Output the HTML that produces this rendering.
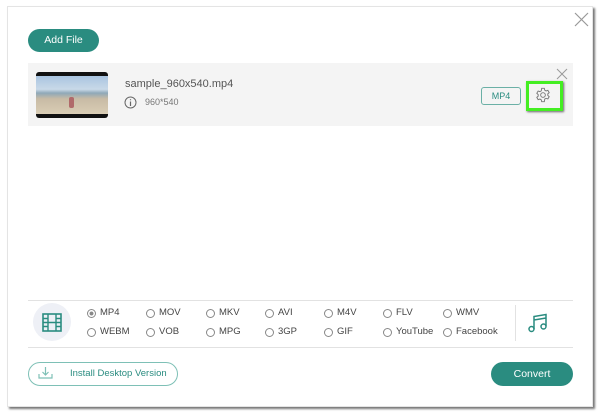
<!DOCTYPE html>
<html><head><style>
*{margin:0;padding:0;box-sizing:border-box}
body{width:600px;height:414px;background:#fff;position:relative;font-family:"Liberation Sans",sans-serif;overflow:hidden}
.panel{position:absolute;left:7px;top:6px;width:586px;height:401px;background:#fff;border:1px solid #e4e4e4;box-shadow:2px 2px 2px #777}
.a{position:absolute}
.btn{position:absolute;background:#2a8c80;color:#fff;border-radius:12px;font-size:10.5px;text-align:center;line-height:23px}
.r{position:absolute;font-size:9.5px;color:#444;line-height:12px}
.r:before{content:"";position:absolute;left:-13px;top:2px;width:7px;height:7px;border:1px solid #888;border-radius:50%}
.r.on:before{background:radial-gradient(#888 35%,#fff 45%)}
</style></head><body>
<div class="panel"></div>
<svg class="a" style="left:574px;top:12px" width="15" height="15"><path d="M1 1L14 14M14 1L1 14" stroke="#999" stroke-width="1.2"/></svg>
<div class="btn" style="left:28px;top:29px;width:71px;height:23px">Add File</div>
<div class="a" style="left:28px;top:63px;width:545px;height:63px;background:#f4f4f4"></div>
<div class="a" style="left:36px;top:72px;width:72px;height:46px;background:#111;border-radius:3px;overflow:hidden">
<div class="a" style="left:0;top:4px;width:72px;height:38px;background:linear-gradient(#a9c4e0 0%,#c9d9e8 35%,#8fa9b8 45%,#c8bba5 60%,#d9cdb5 100%)"></div>
<div class="a" style="left:33px;top:25px;width:5px;height:11px;background:#b06a6a;border-radius:2px"></div></div>
<div class="a" style="left:125px;top:78px;font-size:11px;color:#555">sample_960x540.mp4</div>
<svg class="a" style="left:124px;top:96px" width="13" height="13"><circle cx="6.5" cy="6.5" r="5.5" fill="none" stroke="#666"/><path d="M6.5 5.5V10M6.5 3.3V4.3" stroke="#666" stroke-width="1.2"/></svg>
<div class="a" style="left:145px;top:97px;font-size:9px;color:#777">960*540</div>
<div class="a" style="left:481px;top:87px;width:40px;height:18px;border:1px solid #6bb0a6;border-radius:3px;font-size:9px;color:#2a8c80;text-align:center;line-height:16px">MP4</div>
<svg class="a" style="left:556px;top:68px" width="12" height="12"><path d="M1 1L11 11M11 1L1 11" stroke="#999"/></svg>
<div class="a" style="left:526px;top:81px;width:37px;height:30px;border:3px solid #44ee22;box-shadow:1px 1px 2px #666"></div>
<svg class="a" style="left:535px;top:87px" width="16" height="16" viewBox="0 0 24 24"><path fill="none" stroke="#777" stroke-width="1.4" d="M10 2h4l.6 2.8 2 1.1 2.7-.9 2 3.4-2.1 1.9v2.3l2.1 1.9-2 3.4-2.7-.9-2 1.1L14 22h-4l-.6-2.8-2-1.1-2.7.9-2-3.4 2.1-1.9v-2.3L2.7 9.4l2-3.4 2.7.9 2-1.1z"/><circle cx="12" cy="12" r="3.5" fill="none" stroke="#777" stroke-width="1.4"/></svg>
<div class="a" style="left:28px;top:300px;width:545px;height:1px;background:#e2e2e2"></div>
<div class="a" style="left:28px;top:347px;width:545px;height:1px;background:#e2e2e2"></div>
<div class="a" style="left:33px;top:303px;width:38px;height:38px;border-radius:50%;background:#eef0f6"></div>
<svg class="a" style="left:42px;top:313px" width="20" height="19"><rect x="1" y="1" width="18" height="17" fill="none" stroke="#2a8c80" stroke-width="1.6"/><path d="M6 1v17M14 1v17M1 5.5h5M1 9.5h5M1 13.5h5M14 5.5h5M14 9.5h5M14 13.5h5M6 9.5h8" stroke="#2a8c80" stroke-width="1.4"/></svg>
<div class="r on" style="left:100px;top:307px">MP4</div>
<div class="r" style="left:159px;top:307px">MOV</div>
<div class="r" style="left:219px;top:307px">MKV</div>
<div class="r" style="left:278px;top:307px">AVI</div>
<div class="r" style="left:337px;top:307px">M4V</div>
<div class="r" style="left:396px;top:307px">FLV</div>
<div class="r" style="left:456px;top:307px">WMV</div>
<div class="r" style="left:100px;top:326px">WEBM</div>
<div class="r" style="left:159px;top:326px">VOB</div>
<div class="r" style="left:219px;top:326px">MPG</div>
<div class="r" style="left:278px;top:326px">3GP</div>
<div class="r" style="left:337px;top:326px">GIF</div>
<div class="r" style="left:396px;top:326px">YouTube</div>
<div class="r" style="left:456px;top:326px">Facebook</div>
<div class="a" style="left:515px;top:305px;width:1px;height:36px;background:#e2e2e2"></div>
<svg class="a" style="left:528px;top:313px" width="20" height="20"><path d="M6 16V3.5L18 1.5V13M6 7L18 5" fill="none" stroke="#2a8c80" stroke-width="1.5"/><circle cx="3.5" cy="16" r="2.5" fill="none" stroke="#2a8c80" stroke-width="1.5"/><circle cx="15.5" cy="13.5" r="2.5" fill="none" stroke="#2a8c80" stroke-width="1.5"/></svg>
<div class="a" style="left:28px;top:362px;width:150px;height:24px;border:1px solid #7ec0b6;border-radius:12px"></div>
<svg class="a" style="left:38px;top:366px" width="15" height="14"><path d="M7.5 1v8M4.5 6l3 3 3-3M1 8v4h13V8" fill="none" stroke="#7ec0b6" stroke-width="1.2"/></svg>
<div class="a" style="left:70px;top:368px;font-size:9.5px;color:#2a8c80">Install Desktop Version</div>
<div class="btn" style="left:491px;top:362px;width:82px;height:24px;line-height:24px">Convert</div>
</body></html>
